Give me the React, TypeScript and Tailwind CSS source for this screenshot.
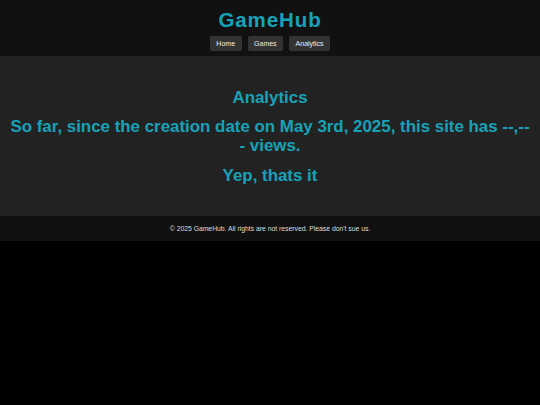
export default function App() {
  const font = { fontFamily: '"Liberation Sans", Arial, sans-serif' };
  return (
    <div className="min-h-screen bg-black" style={font}>
      <header className="bg-[#111] pt-[8px] pb-[5px] text-center">
        <h1 className="text-[20.5px] font-bold tracking-[0.9px] text-[#17a2b8] leading-[23.5px]">GameHub</h1>
        <nav className="mt-[4.5px] flex justify-center gap-[6px]">
          {["Home", "Games", "Analytics"].map((label) => (
            <a key={label} className="rounded-[2px] bg-[#333] px-[6.5px] py-[3.5px] text-[7px] leading-[8px] text-[#eee]">
              {label}
            </a>
          ))}
        </nav>
      </header>
      <main className="flex flex-col gap-[10.5px] bg-[#222] px-[10px] py-[31.5px] text-center text-[16.9px] font-bold leading-[19px] text-[#17a2b8]">
        <h2>Analytics</h2>
        <p>So far, since the creation date on May 3rd, 2025, this site has --,--- views.</p>
        <p>Yep, thats it</p>
      </main>
      <footer className="bg-[#111] py-[8.5px] text-center text-[6.8px] leading-[8px] text-[#ddd]">
        © 2025 GameHub. All rights are not reserved. Please don't sue us.
      </footer>
    </div>
  );
}
